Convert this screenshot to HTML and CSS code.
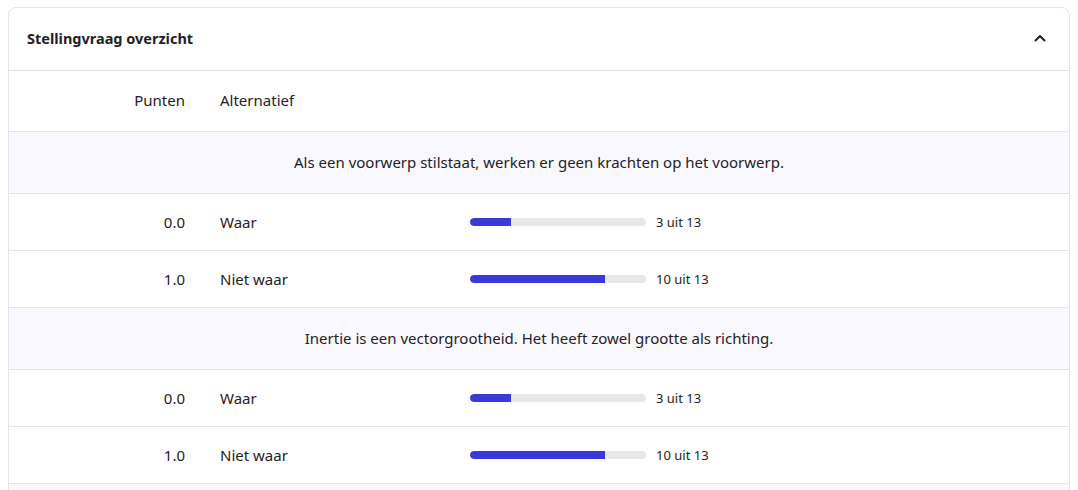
FILE: index.html
```html
<!DOCTYPE html>
<html lang="nl">
<head>
    <meta charset="UTF-8">
    <meta name="viewport" content="width=device-width, initial-scale=1.0">
    <title>Stellingvraag overzicht</title>
    <link rel="stylesheet" href="styles.css">
</head>
<body>

<section class="panel">
    <header class="panel-header">
        <h2>Stellingvraag overzicht</h2>
        <button class="toggle" aria-label="Inklappen">
            <svg width="14" height="14" viewBox="0 0 14 14" fill="none" stroke="#1f2328" stroke-width="2" stroke-linecap="round" stroke-linejoin="round">
                <path d="M2.5 9.5 L7 5 L11.5 9.5"/>
            </svg>
        </button>
    </header>

    <div class="row head">
        <span class="points">Punten</span>
        <span class="alt">Alternatief</span>
    </div>

    <div class="statement">Als een voorwerp stilstaat, werken er geen krachten op het voorwerp.</div>
    <div class="row">
        <span class="points">0.0</span>
        <span class="alt">Waar</span>
        <div class="bar"><div class="fill" style="width: 23.08%"></div></div>
        <span class="count">3 uit 13</span>
    </div>
    <div class="row">
        <span class="points">1.0</span>
        <span class="alt">Niet waar</span>
        <div class="bar"><div class="fill" style="width: 76.92%"></div></div>
        <span class="count">10 uit 13</span>
    </div>

    <div class="statement">Inertie is een vectorgrootheid. Het heeft zowel grootte als richting.</div>
    <div class="row">
        <span class="points">0.0</span>
        <span class="alt">Waar</span>
        <div class="bar"><div class="fill" style="width: 23.08%"></div></div>
        <span class="count">3 uit 13</span>
    </div>
    <div class="row">
        <span class="points">1.0</span>
        <span class="alt">Niet waar</span>
        <div class="bar"><div class="fill" style="width: 76.92%"></div></div>
        <span class="count">10 uit 13</span>
    </div>

    <div class="statement"></div>
</section>

</body>
</html>
```

FILE: styles.css
```css
* {
    margin: 0;
    padding: 0;
    box-sizing: border-box;
}

body {
    font-family: "Noto Sans", Lato, sans-serif;
    color: #1f2126;
    background-color: #fff;
    padding: 7px 8px 0 8px;
    height: 490px;
    overflow: hidden;
}

.panel {
    border: 1px solid #e4e4e7;
    border-radius: 8px;
}

.panel-header {
    display: flex;
    align-items: center;
    justify-content: space-between;
    height: 63px;
    padding: 0 22px 2px 18px;
    border-bottom: 1px solid #e4e4e7;
}

.panel-header h2 {
    font-size: 14.5px;
    font-weight: 700;
}

.toggle {
    display: flex;
    background: none;
    border: none;
    cursor: pointer;
}

.row {
    display: grid;
    grid-template-columns: 176px 285px 176px auto;
    align-items: center;
    height: 57px;
    font-size: 15px;
    border-bottom: 1px solid #e4e4e7;
}

.row.head {
    height: 61px;
    padding-bottom: 2px;
}

.points {
    text-align: right;
}

.alt {
    padding-left: 35px;
}

.bar {
    height: 8px;
    border-radius: 4px;
    background-color: #e8e8e8;
    overflow: hidden;
}

.fill {
    height: 100%;
    border-radius: 4px 0 0 4px;
    background-color: #3a3adb;
}

.count {
    padding-left: 10px;
    font-size: 13px;
}

.statement {
    display: flex;
    align-items: center;
    justify-content: center;
    height: 62px;
    padding-bottom: 2px;
    font-size: 15px;
    background-color: #f9f8fe;
    border-bottom: 1px solid #e4e4e7;
}
```
